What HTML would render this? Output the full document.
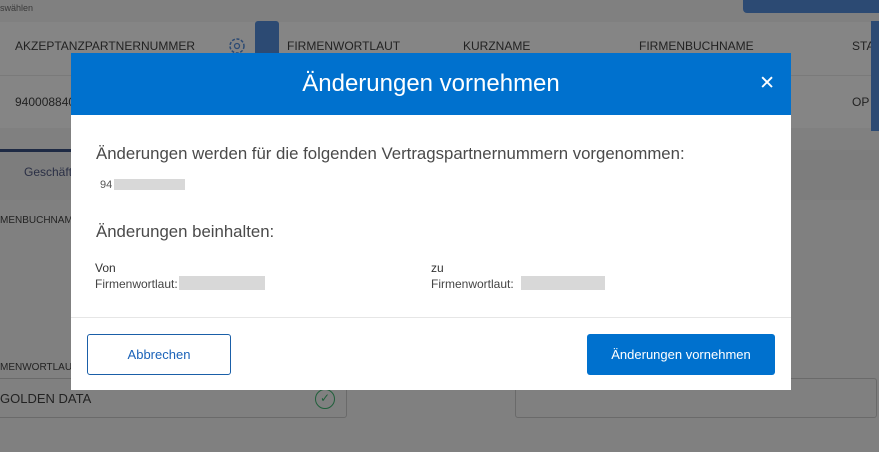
<!DOCTYPE html>
<html><head><meta charset="utf-8"><style>
*{margin:0;padding:0;box-sizing:border-box}
body{width:879px;height:452px;overflow:hidden;background:#808080;font-family:"Liberation Sans",sans-serif;position:relative}
.a{position:absolute}
.bg{color:#222;font-size:12px}
.modal{position:absolute;left:71px;top:53px;width:720px;height:337px;background:#fff}
.hd{height:62px;background:#0071ce;color:#fff;font-size:24px;text-align:center;line-height:62px;position:relative}
.x{position:absolute;right:16px;top:0;font-size:19px}
.grey{background:#d8d8d8;position:absolute}
.t{position:absolute;color:#444}
</style></head><body>
<div class="a bg" style="left:0;top:3px;font-size:9px;color:#3a3a3a">swählen</div>
<div class="a" style="left:743px;top:0;width:136px;height:13px;background:#2c4a73;border-radius:0 0 0 4px"></div>
<div class="a" style="left:0;top:22px;width:879px;height:106px;background:#858585"></div>
<div class="a" style="left:0;top:75px;width:879px;height:1px;background:#7a7a7a"></div>
<div class="a bg" style="left:15px;top:39px">AKZEPTANZPARTNERNUMMER</div>
<svg class="a" style="left:227px;top:36px" width="20" height="20" viewBox="0 0 20 20"><circle cx="10" cy="10" r="7" fill="none" stroke="#2c4a73" stroke-width="1.5" stroke-dasharray="3 1.6"/><circle cx="10" cy="10" r="2.5" fill="none" stroke="#2c4a73" stroke-width="1.3"/></svg>
<div class="a" style="left:255px;top:21px;width:24px;height:35px;background:#2c4a73;border-radius:3px 3px 0 0"></div>
<div class="a bg" style="left:287px;top:39px">FIRMENWORTLAUT</div>
<div class="a bg" style="left:463px;top:39px">KURZNAME</div>
<div class="a bg" style="left:639px;top:39px">FIRMENBUCHNAME</div>
<div class="a bg" style="left:852px;top:39px">STA</div>
<div class="a" style="left:871px;top:21px;width:8px;height:110px;background:#2c4a73"></div>
<div class="a bg" style="left:15px;top:95px">940008840</div>
<div class="a bg" style="left:852px;top:95px">OP</div>
<div class="a" style="left:0;top:150px;width:879px;height:50px;background:#7d7d7d"></div>
<div class="a" style="left:0;top:149px;width:71px;height:3px;background:#1e2a44"></div>
<div class="a bg" style="left:24px;top:165px;color:#2a2f45">Geschäft</div>
<div class="a bg" style="left:0;top:215px;font-size:10px">MENBUCHNAME</div>
<div class="a bg" style="left:0;top:362px;font-size:10px">MENWORTLAUT</div>
<div class="a" style="left:-5px;top:378px;width:352px;height:40px;border:1px solid #6a6a6a;border-radius:3px"></div>
<div class="a bg" style="left:0;top:391px;font-size:13px">GOLDEN DATA</div>
<div class="a" style="left:315px;top:389px;width:20px;height:20px;border:1.5px solid #1f5f3a;border-radius:50%;color:#1f5f3a;font-size:12px;text-align:center;line-height:17px">✓</div>
<div class="a" style="left:515px;top:378px;width:362px;height:40px;border:1px solid #6a6a6a;border-radius:3px"></div>

<div class="modal">
<div class="hd">Änderungen vornehmen<span class="x">✕</span></div>
<div class="t" style="left:25px;top:91px;font-size:16.8px;color:#4a4a4a">Änderungen werden für die folgenden Vertragspartnernummern vorgenommen:</div>
<div class="t" style="left:29px;top:126px;font-size:11px;color:#555">94</div>
<div class="grey" style="left:43px;top:126px;width:71px;height:11px"></div>
<div class="t" style="left:25px;top:169px;font-size:16.8px;color:#4a4a4a">Änderungen beinhalten:</div>
<div class="t" style="left:24px;top:208px;font-size:12px;color:#333">Von</div>
<div class="t" style="left:24px;top:224px;font-size:12px;color:#444">Firmenwortlaut:</div>
<div class="grey" style="left:108px;top:223px;width:86px;height:14px"></div>
<div class="t" style="left:360px;top:208px;font-size:12px;color:#333">zu</div>
<div class="t" style="left:360px;top:224px;font-size:12px;color:#444">Firmenwortlaut:</div>
<div class="grey" style="left:450px;top:223px;width:84px;height:14px"></div>
<div class="a" style="left:0;top:264px;width:720px;height:1px;background:#e6e6e6"></div>
<div class="a" style="left:16px;top:281px;width:144px;height:41px;border:1px solid #1a5fa8;border-radius:3px;color:#1a62b8;font-size:13px;text-align:center;line-height:39px">Abbrechen</div>
<div class="a" style="left:516px;top:281px;width:188px;height:41px;background:#0071ce;border-radius:3px;color:#fff;font-size:13px;text-align:center;line-height:41px">Änderungen vornehmen</div>
</div>
</body></html>
